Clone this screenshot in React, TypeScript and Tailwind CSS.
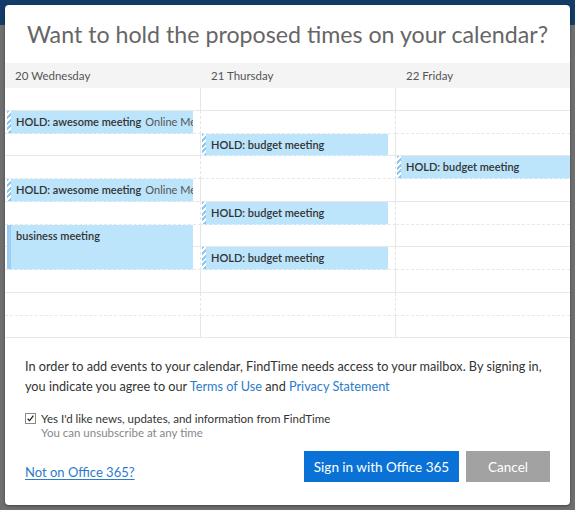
import React from "react";

type CalEvent = {
  pos: string;
  title: string;
  extra?: string;
  hold: boolean;
};

const days = ["20 Wednesday", "21 Thursday", "22 Friday"];

const rows = Array.from({ length: 11 }, (_, i) => i);

const events: CalEvent[] = [
  { pos: "col-start-1 row-start-2 ml-[2px]", title: "HOLD: awesome meeting", extra: "Online Meeting", hold: true },
  { pos: "col-start-2 row-start-3 ml-px", title: "HOLD: budget meeting", hold: true },
  { pos: "col-start-3 row-start-4 ml-px mr-0", title: "HOLD: budget meeting", hold: true },
  { pos: "col-start-1 row-start-5 ml-[2px]", title: "HOLD: awesome meeting", extra: "Online Meeting", hold: true },
  { pos: "col-start-2 row-start-6 ml-px", title: "HOLD: budget meeting", hold: true },
  { pos: "col-start-1 row-start-7 row-span-2 ml-[2px]", title: "business meeting", hold: false },
  { pos: "col-start-2 row-start-8 ml-px", title: "HOLD: budget meeting", hold: true },
];

const colStart = ["col-start-1", "col-start-2", "col-start-3"];
const rowStart = [
  "row-start-1",
  "row-start-2",
  "row-start-3",
  "row-start-4",
  "row-start-5",
  "row-start-6",
  "row-start-7",
  "row-start-8",
  "row-start-9",
  "row-start-10",
  "row-start-11",
];

const EventBlock = ({ ev }: { ev: CalEvent }) => {
  const isThird = ev.pos.includes("col-start-3");
  return (
    <div
      className={`${ev.pos} ${isThird ? "" : "mr-[8px]"} z-10 flex overflow-hidden bg-[#bce4fb] border-b border-dashed border-[#e4f1fa]`}
    >
      <div
        className={
          ev.hold
            ? "w-[4px] shrink-0 bg-[repeating-linear-gradient(135deg,#8cc8f2_0px,#8cc8f2_2px,#ffffff_2px,#ffffff_4px)]"
            : "w-[4px] shrink-0 bg-[#9ccdf4]"
        }
      />
      <div className="pl-[5px] pt-[4px] whitespace-nowrap text-[11px] leading-[14px] text-[#333]">
        <span className="font-semibold">{ev.title}</span>
        {ev.extra && <span className="ml-[4px] text-[#555]">{ev.extra}</span>}
      </div>
    </div>
  );
};

const App: React.FC = () => {
  return (
    <div
      className="w-[575px] h-[510px] p-[5px] bg-[linear-gradient(to_bottom,#143c69_0px,#143c69_25px,#6f6f6f_25px,#6f6f6f_100%)]"
      style={{ fontFamily: 'Lato, "Open Sans", sans-serif' }}
    >
      <div className="flex h-full flex-col overflow-hidden rounded-[4px] bg-white shadow-[0_1px_3px_rgba(0,0,0,0.4)]">
        <h1 className="h-[58px] pt-[13px] text-center text-[23.2px] leading-[32px] font-normal text-[#666]">
          Want to hold the proposed times on your calendar?
        </h1>

        <div className="grid h-[25px] grid-cols-[196px_195px_1fr] bg-[#f4f4f4] text-[11.5px] leading-[25px] text-[#555]">
          {days.map((d) => (
            <div key={d} className="pl-[10px]">
              {d}
            </div>
          ))}
        </div>

        <div className="grid grid-cols-[196px_195px_1fr] grid-rows-[repeat(11,22.75px)]">
          {days.map((d, c) =>
            rows.map((r) => (
              <div
                key={`${d}-${r}`}
                className={`${colStart[c]} ${rowStart[r]} ${c < 2 ? "border-r border-r-[#e6e6e6]" : ""} border-b ${
                  r % 2 === 0 ? "border-solid border-b-[#e8e8e8]" : "border-dashed border-b-[#e8e8e8]"
                }`}
              />
            ))
          )}
          {events.map((ev, i) => (
            <EventBlock key={i} ev={ev} />
          ))}
        </div>

        <div className="pl-[20px] pr-[16px] pt-[18px] text-[12.7px] leading-[20px] text-[#333]">
          <p>
            In order to add events to your calendar, FindTime needs access to your mailbox. By signing in,
            you indicate you agree to our{" "}
            <a className="text-[#2d7bcb]">Terms of Use</a> and{" "}
            <a className="text-[#2d7bcb]">Privacy Statement</a>
          </p>

          <div className="mt-[16px] flex items-start gap-[5px]">
            <div className="mt-[1px] flex h-[11px] w-[11px] items-center justify-center border border-[#8a8a8a] bg-white">
              <svg viewBox="0 0 10 10" className="h-[9px] w-[9px]">
                <path d="M1.8 5.2 L4 7.4 L8.2 1.8" fill="none" stroke="#222" strokeWidth="1.4" />
              </svg>
            </div>
            <div className="text-[11.5px] leading-[14px]">
              <div className="text-[#333]">Yes I'd like news, updates, and information from FindTime</div>
              <div className="text-[#888]">You can unsubscribe at any time</div>
            </div>
          </div>

          <div className="mt-[11px] mr-[4px] flex items-center justify-between">
            <a className="pt-[11px] text-[13px] text-[#2d7bcb] underline underline-offset-2">Not on Office 365?</a>
            <div className="flex gap-[7px]">
              <button className="h-[31px] w-[155px] bg-[#0a72d6] text-[13.5px] text-white">Sign in with Office 365</button>
              <button className="h-[31px] w-[84px] bg-[#a2a2a2] text-[13.5px] text-white">Cancel</button>
            </div>
          </div>
        </div>
      </div>
    </div>
  );
};

export default App;
